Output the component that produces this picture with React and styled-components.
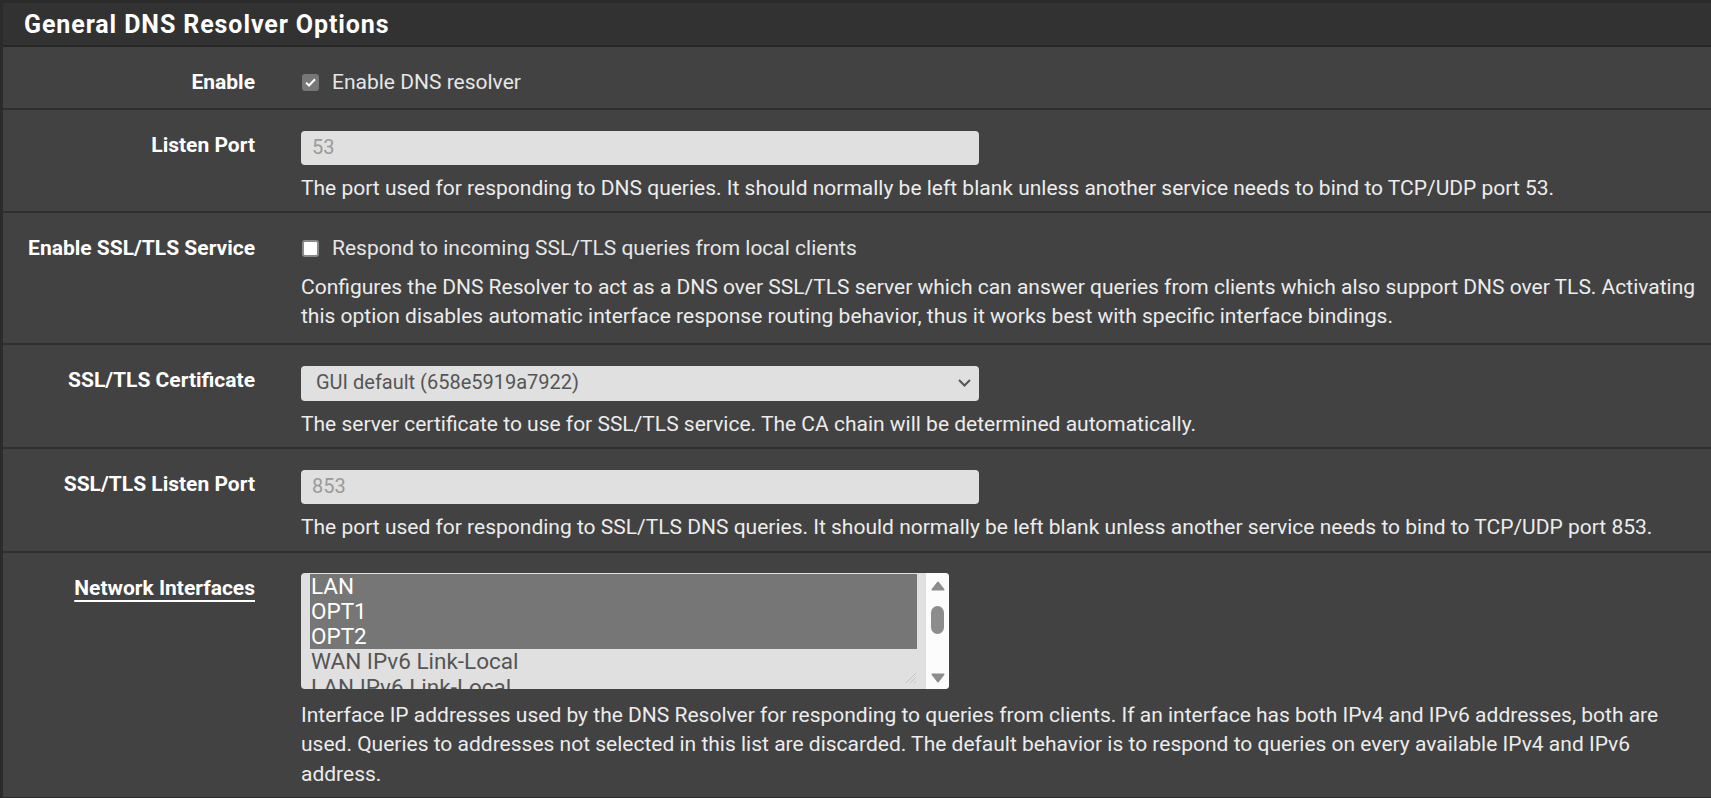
import React from 'react'
import styled, { createGlobalStyle } from 'styled-components'

const GlobalStyle = createGlobalStyle`
  html, body {
    margin: 0;
    padding: 0;
    background: #1f1f1f;
  }
  body {
    font-family: Roboto, "Noto Sans", "Liberation Sans", sans-serif;
    font-size: 21px;
    color: #e6e6e6;
  }
`

const Panel = styled.div`
  background: #424242;
  border-left: 3px solid #2b2b2b;
  border-top: 3px solid #2b2b2b;
  border-bottom: 2px solid #2b2b2b;
`

const Heading = styled.h2`
  margin: 0;
  height: 42px;
  padding: 0 21px;
  display: flex;
  align-items: center;
  background: #323232;
  border-bottom: 2px solid #262626;
  color: #fff;
  font-size: 25px;
  font-weight: 700;
  letter-spacing: 0.9px;
`

const Row = styled.div`
  display: grid;
  grid-template-columns: 252px 1fr;
  column-gap: 46px;
  padding: 21px 14px ${p => p.$pb || 8}px 0;
  border-bottom: 2px solid #2f2f2f;
  line-height: 29.5px;

  &:last-child {
    border-bottom: none;
  }
`

const Label = styled.div`
  text-align: right;
  font-weight: 700;
  color: #fff;
  text-decoration: ${p => (p.$link ? 'underline' : 'none')};
  text-underline-offset: 5px;
  text-decoration-thickness: 2px;
`

const Control = styled.div`
  display: flex;
  flex-direction: column;
  align-items: flex-start;
  min-width: 0;
`

const Help = styled.div`
  margin-top: ${p => (p.$wide ? '12px' : '9px')};
  color: #ececec;
`

const CheckLine = styled.label`
  display: flex;
  align-items: center;
  gap: 13px;
  padding-left: 1px;
`

const Box = styled.span`
  box-sizing: border-box;
  width: 17px;
  height: 17px;
  border-radius: 3px;
  display: inline-flex;
  align-items: center;
  justify-content: center;
  background: ${p => (p.$checked ? '#777' : '#fff')};
  border: 2px solid ${p => (p.$checked ? '#777' : '#8a8a8a')};
`

const TextInput = styled.div`
  box-sizing: border-box;
  width: 678px;
  height: ${p => (p.$tall ? '35px' : '34px')};
  padding: 0 11px;
  display: flex;
  align-items: center;
  background: #e0e0e0;
  border-radius: 4px;
  color: #9a9a9a;
  font-size: 20px;
`

const Select = styled(TextInput)`
  justify-content: space-between;
  color: #555;
  padding: 0 8px 0 15px;
`

const ListBox = styled.div`
  box-sizing: border-box;
  width: 648px;
  height: 116px;
  margin-top: -1px;
  display: flex;
  background: #e0e0e0;
  border-radius: 4px;
  overflow: hidden;
`

const Options = styled.div`
  position: relative;
  flex: 1;
  padding: 1px 9px 0 9px;
  overflow: hidden;
`

const Option = styled.div`
  height: 25.3px;
  line-height: 25px;
  padding-left: 1px;
  font-size: 22.5px;
  color: ${p => (p.$selected ? '#fff' : '#555')};
  background: ${p => (p.$selected ? '#767676' : 'transparent')};
  white-space: nowrap;
`

const Grip = styled.svg`
  position: absolute;
  right: 10px;
  bottom: 6px;
`

const Scrollbar = styled.div`
  width: 23px;
  background: #fcfcfc;
  display: flex;
  flex-direction: column;
  align-items: center;
  padding: 8px 0 6px;
  box-sizing: border-box;
`

const Thumb = styled.div`
  width: 13px;
  height: 28px;
  border-radius: 7px;
  background: #8c8c8c;
  margin-top: 15px;
  margin-bottom: auto;
`

const Check = () => (
  <svg width="11" height="9" viewBox="0 0 11 9">
    <path d="M1 4.6 L4 7.5 L10 1.2" fill="none" stroke="#fff" strokeWidth="2" />
  </svg>
)

const Chevron = () => (
  <svg width="13" height="8" viewBox="0 0 13 8">
    <path d="M1 1 L6.5 6.5 L12 1" fill="none" stroke="#555" strokeWidth="2" />
  </svg>
)

const Arrow = ({ down }) => (
  <svg width="14" height="10" viewBox="0 0 14 10">
    <path
      d={down ? 'M1.5 1.5 H12.5 L7 8.5 Z' : 'M1.5 8.5 H12.5 L7 1.5 Z'}
      fill="#8c8c8c"
      stroke="#8c8c8c"
      strokeLinejoin="round"
      strokeWidth="2"
    />
  </svg>
)

const interfaces = [
  { name: 'LAN', selected: true },
  { name: 'OPT1', selected: true },
  { name: 'OPT2', selected: true },
  { name: 'WAN IPv6 Link-Local' },
  { name: 'LAN IPv6 Link-Local' },
  { name: 'OPT1 IPv6 Link-Local' }
]

export default function App() {
  return (
    <>
      <GlobalStyle />
      <Panel>
        <Heading>General DNS Resolver Options</Heading>

        <Row $pb={10}>
          <Label>Enable</Label>
          <Control>
            <CheckLine>
              <Box $checked><Check /></Box>
              Enable DNS resolver
            </CheckLine>
          </Control>
        </Row>

        <Row>
          <Label>Listen Port</Label>
          <Control>
            <TextInput>53</TextInput>
            <Help>
              The port used for responding to DNS queries. It should normally be left blank unless another service needs to bind to TCP/UDP port 53.
            </Help>
          </Control>
        </Row>

        <Row $pb={11}>
          <Label>Enable SSL/TLS Service</Label>
          <Control>
            <CheckLine>
              <Box />
              Respond to incoming SSL/TLS queries from local clients
            </CheckLine>
            <Help>
              Configures the DNS Resolver to act as a DNS over SSL/TLS server which can answer queries from clients which also support DNS over TLS. Activating this option disables automatic interface response routing behavior, thus it works best with specific interface bindings.
            </Help>
          </Control>
        </Row>

        <Row>
          <Label>SSL/TLS Certificate</Label>
          <Control>
            <Select $tall>
              GUI default (658e5919a7922)
              <Chevron />
            </Select>
            <Help>The server certificate to use for SSL/TLS service. The CA chain will be determined automatically.</Help>
          </Control>
        </Row>

        <Row>
          <Label>SSL/TLS Listen Port</Label>
          <Control>
            <TextInput>853</TextInput>
            <Help>
              The port used for responding to SSL/TLS DNS queries. It should normally be left blank unless another service needs to bind to TCP/UDP port 853.
            </Help>
          </Control>
        </Row>

        <Row>
          <Label $link>Network Interfaces</Label>
          <Control>
            <ListBox>
              <Options>
                {interfaces.map(i => (
                  <Option key={i.name} $selected={i.selected}>{i.name}</Option>
                ))}
                <Grip width="12" height="10" viewBox="0 0 12 10">
                  <path d="M2 10 L12 0 M6 10 L12 4 M10 10 L12 8" stroke="#c4c4c4" strokeWidth="1" />
                </Grip>
              </Options>
              <Scrollbar>
                <Arrow />
                <Thumb />
                <Arrow down />
              </Scrollbar>
            </ListBox>
            <Help $wide>
              Interface IP addresses used by the DNS Resolver for responding to queries from clients. If an interface has both IPv4 and IPv6 addresses, both are used. Queries to addresses not selected in this list are discarded. The default behavior is to respond to queries on every available IPv4 and IPv6 address.
            </Help>
          </Control>
        </Row>
      </Panel>
    </>
  )
}
